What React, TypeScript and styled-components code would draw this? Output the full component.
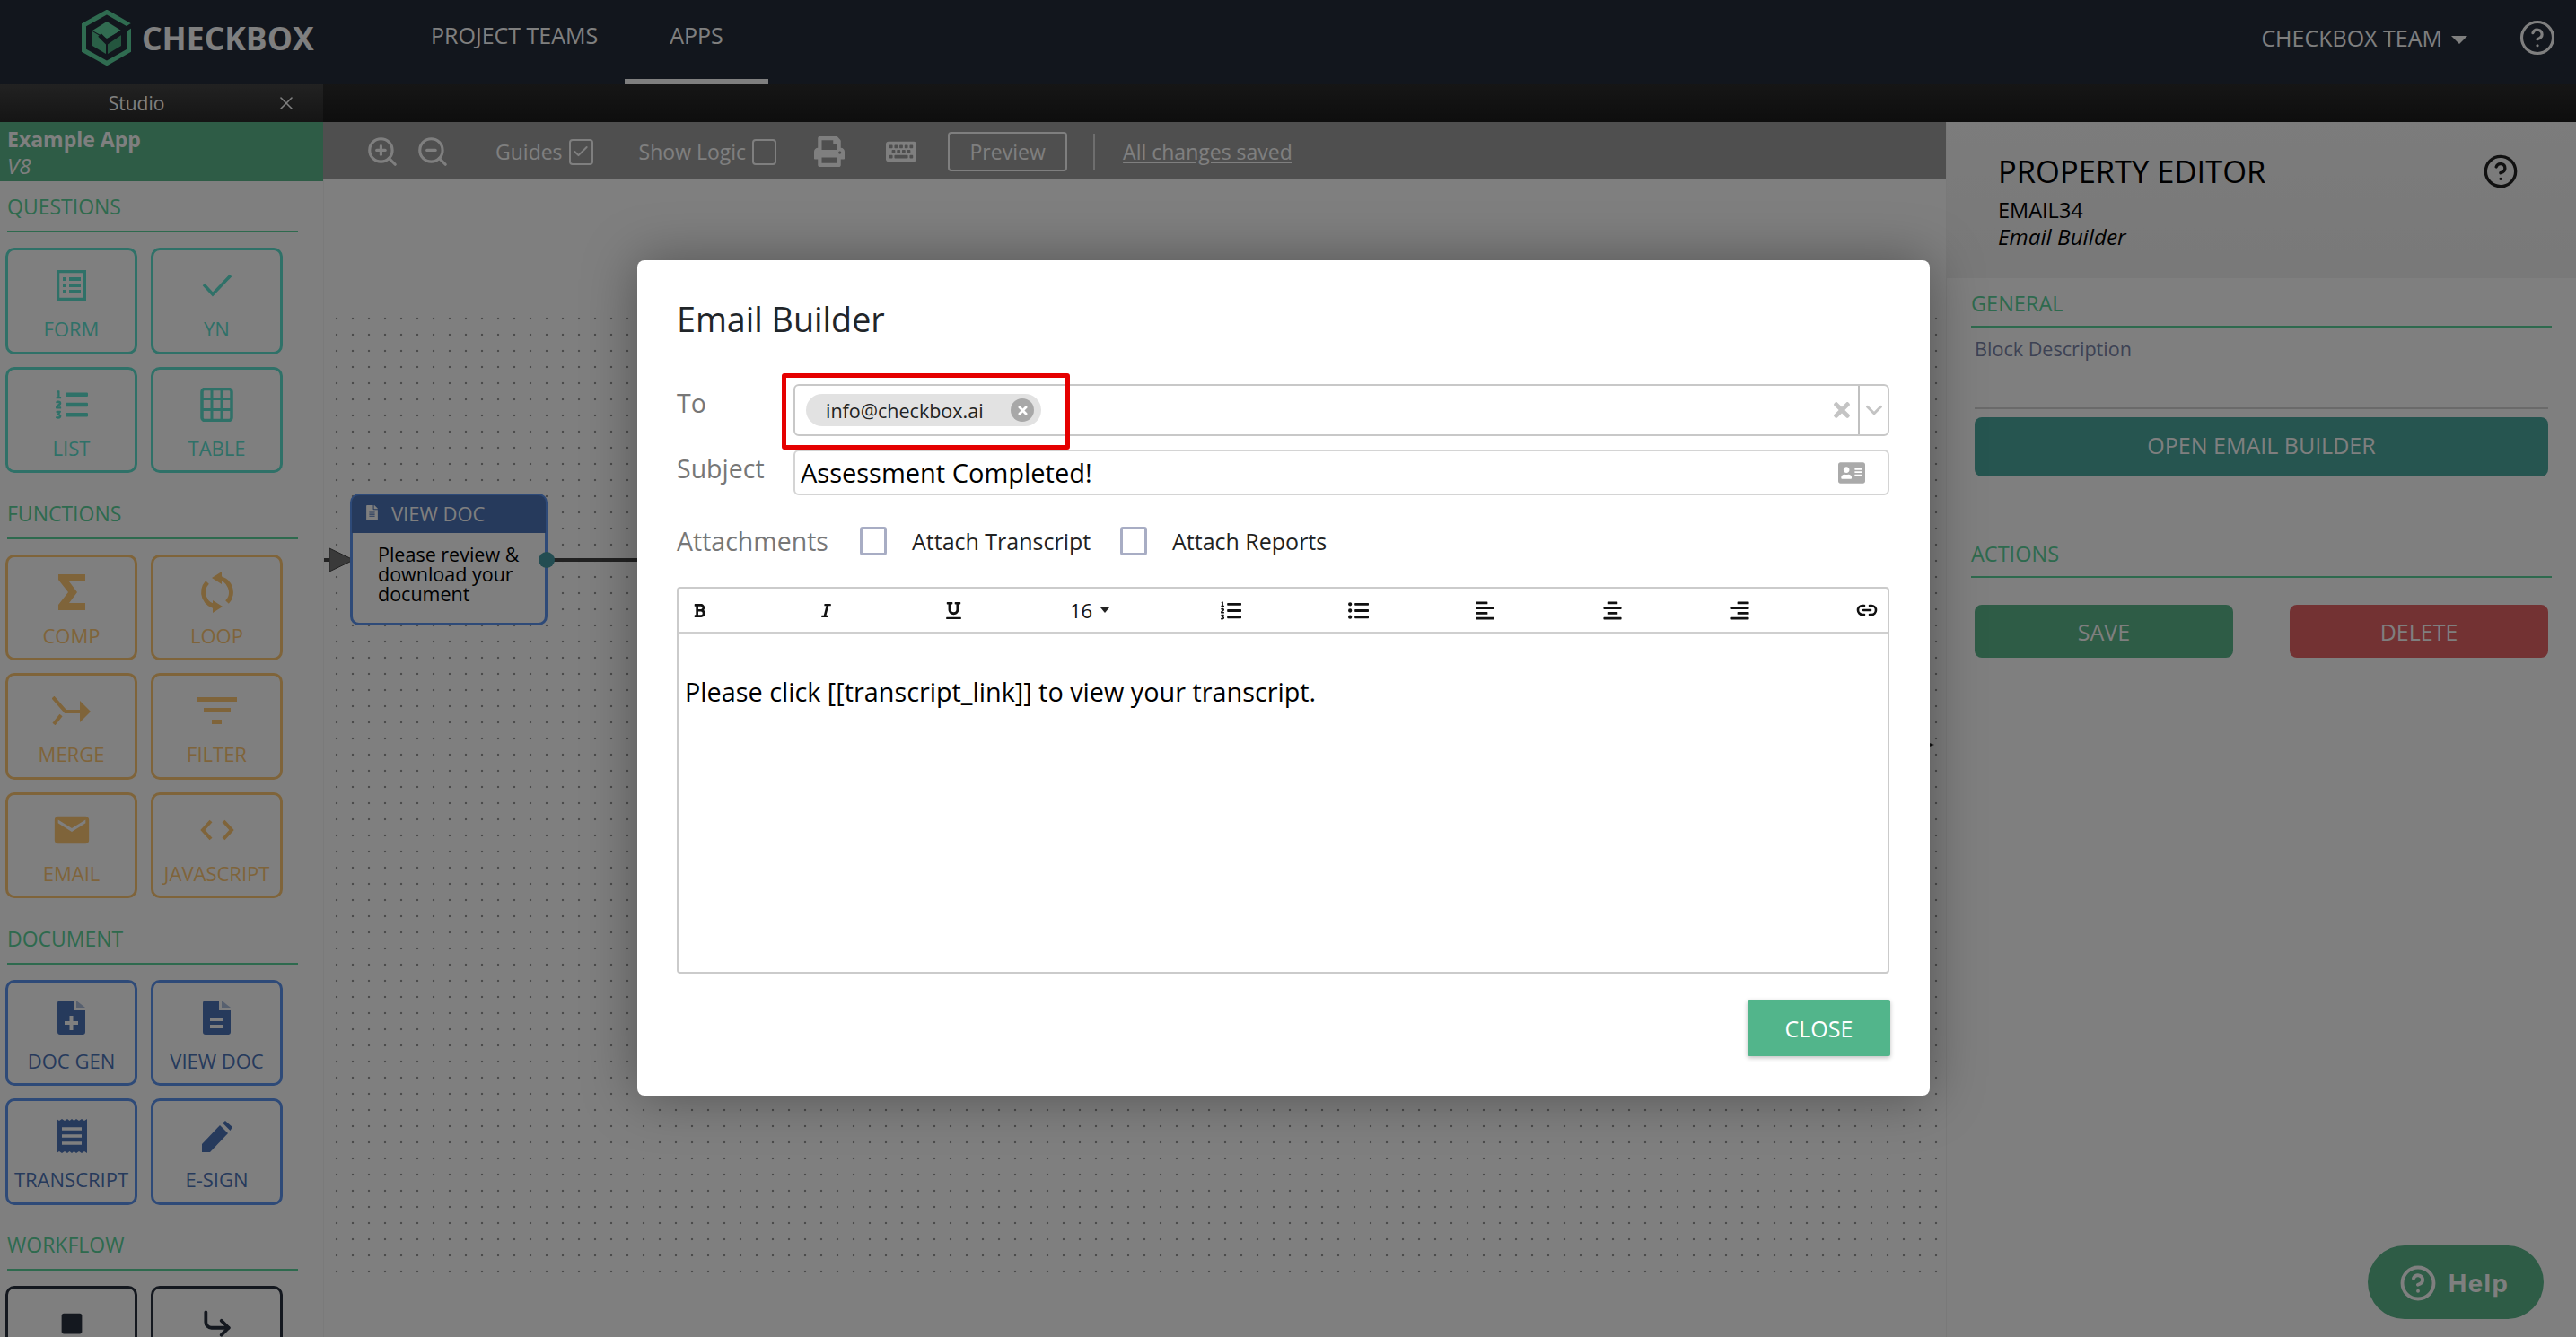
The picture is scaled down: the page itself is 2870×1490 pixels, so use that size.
import React from "react";
import styled, { createGlobalStyle } from "styled-components";
import {
  ChevronDown,
  Check,
  CircleHelp,
  CornerDownRight,
  Link2,
  X,
  ZoomIn,
  ZoomOut,
} from "lucide-react";
import {
  FaAddressCard,
  FaAlignCenter,
  FaAlignLeft,
  FaAlignRight,
  FaBold,
  FaFileAlt,
  FaItalic,
  FaKeyboard,
  FaListOl,
  FaListUl,
  FaPrint,
  FaSquare,
  FaTimes,
  FaUnderline,
} from "react-icons/fa";
import { MdEmail } from "react-icons/md";

type Tone = "teal" | "gold" | "blue" | "ink";

const toneColors: Record<Tone, { border: string; fg: string }> = {
  teal: { border: "#5ee2d0", fg: "#5ee2d0" },
  gold: { border: "#ffc874", fg: "#ffc874" },
  blue: { border: "#5c94f0", fg: "#4c74b8" },
  ink: { border: "#28303e", fg: "#28303e" },
};

const GlobalStyle = createGlobalStyle`
  html, body {
    margin: 0;
    height: 100%;
    overflow: hidden;
    background: #fff;
    font-family: "Open Sans", "Liberation Sans", sans-serif;
  }
  * { box-sizing: border-box; }
`;

const Page = styled.div`
  position: relative;
  width: 2870px;
  height: 1490px;
  overflow: hidden;
  display: flex;
  flex-direction: column;
`;

const TopNav = styled.header`
  height: 94px;
  flex-shrink: 0;
  display: flex;
  align-items: center;
  padding: 0 22px 0 91px;
  background: #242c3a;
  color: #fff;
`;

const Brand = styled.div`
  display: flex;
  align-items: center;
  gap: 10px;
  width: 389px;
  padding-bottom: 10px;
`;

const BrandName = styled.span`
  font-size: 35.5px;
  font-weight: 700;
  line-height: 44px;
  color: #fff;
`;

const NavLinks = styled.nav`
  display: flex;
  gap: 30px;
  height: 100%;
`;

const NavLink = styled.a<{ $active?: boolean }>`
  display: flex;
  align-items: center;
  height: 100%;
  padding: ${({ $active }) => ($active ? "0 50px" : "0")};
  padding-bottom: 10px;
  font-size: 25px;
  border-bottom: 6px solid ${({ $active }) => ($active ? "#fff" : "transparent")};
`;

const TeamMenu = styled.div`
  margin-left: auto;
  display: flex;
  align-items: center;
  padding-bottom: 10px;
  font-size: 25px;
`;

const Caret = styled.span`
  width: 0;
  height: 0;
  margin: 4px 57px 0 10px;
  border-left: 9px solid transparent;
  border-right: 9px solid transparent;
  border-top: 9px solid #fff;
`;

const Workspace = styled.div`
  flex: 1;
  min-height: 0;
  display: flex;
`;

const Sidebar = styled.aside`
  width: 360px;
  flex-shrink: 0;
  background: #fff;
  overflow: hidden;
`;

const StudioTab = styled.div`
  height: 42px;
  position: relative;
  display: flex;
  align-items: center;
  justify-content: center;
  padding-right: 56px;
  font-size: 21px;
  color: #fff;
  background: linear-gradient(180deg, #444 0%, #2a2a2a 100%);
`;

const StudioClose = styled(X)`
  position: absolute;
  right: 29px;
  top: 9px;
`;

const AppTitle = styled.div`
  height: 66px;
  padding: 3px 8px 0;
  background: #5cb88c;
  color: #fff;
`;

const AppName = styled.div`
  font-size: 23px;
  font-weight: 700;
  line-height: 32px;
`;

const AppVersion = styled.div`
  font-size: 24px;
  font-style: italic;
  line-height: 28px;
`;

const PaletteSection = styled.section`
  padding-top: 11px;
  & + & {
    padding-top: 27.5px;
  }
`;

const SectionHeading = styled.h3`
  margin: 0 28px 17px 8px;
  padding-bottom: 10px;
  font-size: 23px;
  font-weight: 400;
  line-height: 34px;
  color: #5cd49c;
  border-bottom: 2px solid #5cd49c;
`;

const BlockGrid = styled.div`
  display: grid;
  grid-template-columns: 147px 147px;
  grid-auto-rows: 118.5px;
  column-gap: 15px;
  row-gap: 14px;
  margin-left: 6px;
`;

const BlockButton = styled.div<{ $tone: Tone }>`
  display: flex;
  flex-direction: column;
  align-items: center;
  padding-top: 19px;
  border: 3.5px solid ${({ $tone }) => toneColors[$tone].border};
  border-radius: 10px;
  color: ${({ $tone }) => toneColors[$tone].fg};
`;

const BlockIcon = styled.div`
  height: 40px;
  display: flex;
  align-items: center;
  justify-content: center;
`;

const BlockLabel = styled.div`
  margin-top: 13px;
  font-size: 22px;
  line-height: 30px;
  white-space: nowrap;
`;

const MainColumn = styled.div`
  flex: 1;
  min-width: 0;
  display: flex;
  flex-direction: column;
`;

const DarkBand = styled.div`
  height: 42px;
  flex-shrink: 0;
  background: linear-gradient(180deg, #2c2c2c 0%, #1c1c1c 100%);
`;

const MainRow = styled.div`
  flex: 1;
  min-height: 0;
  display: flex;
`;

const CanvasColumn = styled.div`
  width: 1808px;
  flex-shrink: 0;
  display: flex;
  flex-direction: column;
`;

const ToolBar = styled.div`
  height: 64px;
  flex-shrink: 0;
  display: flex;
  align-items: center;
  padding: 2px 0 0 47px;
  background: #9e9e9e;
  color: #fff;
  font-size: 23px;
`;

const ToolSlot = styled.div<{ $gap: number }>`
  display: flex;
  align-items: center;
  gap: 7px;
  margin-left: ${({ $gap }) => $gap}px;
`;

const ToolCheck = styled.span`
  width: 27px;
  height: 29px;
  display: flex;
  align-items: center;
  justify-content: center;
  border: 2.5px solid #fff;
  border-radius: 4px;
`;

const PreviewButton = styled.div`
  width: 133px;
  height: 44px;
  display: flex;
  align-items: center;
  justify-content: center;
  border: 2.5px solid #fff;
  border-radius: 4px;
`;

const ToolDivider = styled.span`
  display: block;
  width: 2px;
  height: 40px;
  background: #ddd;
`;

const SavedLink = styled.a`
  text-decoration: underline;
`;

const Canvas = styled.div`
  position: relative;
  flex: 1;
  padding: 146px 0 0 5px;
  background: #fefefe;
  border-left: 1px solid #f4f4f4;
`;

const DotField = styled.div`
  height: 1080px;
  background-image: radial-gradient(circle, #999 1.2px, transparent 1.6px);
  background-size: 18px 18px;
`;

const FlowNode = styled.div`
  position: absolute;
  left: 29px;
  top: 350px;
  width: 220px;
  height: 147px;
  background: #fefefe;
  border: 3.5px solid #5c94f0;
  border-radius: 10px;
`;

const FlowNodeHead = styled.div`
  height: 42px;
  margin: -1px -1px 0;
  display: flex;
  align-items: center;
  gap: 13px;
  padding: 0 0 3px 14px;
  background: #4c74b8;
  border-radius: 8px 8px 0 0;
  color: #fff;
  font-size: 22px;
`;

const FlowNodeText = styled.div`
  padding: 13px 8px 0 28px;
  font-size: 21.5px;
  line-height: 22px;
  color: #000;
`;

const InArrow = styled.svg`
  position: absolute;
  left: 0;
  top: 410px;
`;

const OutArrow = styled.span`
  position: absolute;
  left: 1778px;
  top: 624px;
  width: 0;
  height: 0;
  border-top: 6px solid transparent;
  border-bottom: 6px solid transparent;
  border-left: 16px solid #222;
`;

const NodePort = styled.span`
  position: absolute;
  left: 239px;
  top: 415px;
  width: 18px;
  height: 18px;
  border-radius: 50%;
  background: #469aa4;
`;

const NodeWire = styled.span`
  position: absolute;
  left: 256px;
  top: 422px;
  width: 400px;
  height: 4px;
  background: #444;
`;

const PropertyPanel = styled.aside`
  flex: 1;
  display: flex;
  flex-direction: column;
  background: #fff;
  border-left: 1px solid #f2f2f2;
`;

const PanelHeader = styled.div`
  height: 174px;
  flex-shrink: 0;
  padding: 30px 64px 0 57px;
  background: linear-gradient(180deg, #f8f8f8 0%, #f2f2f2 100%);
  color: #111;
`;

const PanelTitleRow = styled.div`
  display: flex;
  align-items: center;
  justify-content: space-between;
  margin-bottom: 3px;
`;

const PanelTitle = styled.h2`
  margin: 0;
  font-size: 34.5px;
  font-weight: 400;
  line-height: 50px;
  color: #000;
`;

const PanelMeta = styled.div<{ $italic?: boolean }>`
  font-size: ${({ $italic }) => ($italic ? "24.3px" : "23.5px")};
  line-height: 30px;
  color: #000;
  font-style: ${({ $italic }) => ($italic ? "italic" : "normal")};
`;

const PanelBody = styled.div`
  padding: 13px 27px 0;
`;

const PanelHeading = styled.h3<{ $top?: number }>`
  margin: ${({ $top }) => $top ?? 0}px 0 0;
  padding-bottom: 10px;
  font-size: 23.5px;
  font-weight: 400;
  line-height: 30px;
  color: #5cd49c;
  border-bottom: 2px solid #5cd49c;
`;

const DescriptionField = styled.div`
  height: 91px;
  margin: 0 4px;
  padding-top: 9px;
  font-size: 21.6px;
  line-height: 30px;
  color: #7a84a8;
  border-bottom: 2px solid #d4d4d4;
`;

const PanelButton = styled.div<{ $bg: string; $h: number; $lift?: number }>`
  height: ${({ $h }) => $h}px;
  display: flex;
  align-items: center;
  justify-content: center;
  padding-bottom: ${({ $lift }) => $lift ?? 0}px;
  border-radius: 8px;
  background: ${({ $bg }) => $bg};
  color: #fff;
  font-size: 25px;
`;

const WideButtonSlot = styled.div`
  margin: 9px 4px 0;
`;

const ActionRow = styled.div`
  display: flex;
  justify-content: space-between;
  margin: 30px 4px 0;
  & > * {
    width: 288px;
  }
`;

const HelpPill = styled.div`
  position: absolute;
  right: 36px;
  bottom: 20px;
  width: 196px;
  height: 82px;
  display: flex;
  align-items: center;
  justify-content: center;
  gap: 13px;
  padding: 2px 4px 0 0;
  border-radius: 41px;
  background: #5cb88c;
  color: #fff;
  font-family: Inter, "Liberation Sans", sans-serif;
  font-size: 27.5px;
  font-weight: 700;
  letter-spacing: 1.5px;
`;

const Backdrop = styled.div`
  position: absolute;
  inset: 0;
  padding: 290px 0 0 710px;
  background: rgba(0, 0, 0, 0.5);
`;

const Modal = styled.div`
  width: 1440px;
  height: 931px;
  padding: 42px 45px 0 44px;
  display: flex;
  flex-direction: column;
  background: #fff;
  border-radius: 8px;
  box-shadow: 0 0 60px rgba(0, 0, 0, 0.35);
`;

const ModalTitle = styled.h1`
  margin: 0 0 48px;
  font-size: 37.7px;
  font-weight: 400;
  line-height: 48px;
  color: #212529;
`;

const FieldRow = styled.div<{ $h: number; $labelTop: number }>`
  display: grid;
  grid-template-columns: 130px 1fr;
  height: ${({ $h }) => $h}px;
  margin-bottom: 15px;
  & > label {
    padding-top: ${({ $labelTop }) => $labelTop}px;
  }
`;

const FieldLabel = styled.label`
  font-size: 28.5px;
  line-height: 40px;
  color: #777;
`;

const SelectBox = styled.div`
  position: relative;
  display: flex;
  align-items: center;
  padding-left: 12px;
  border: 2px solid #c8c8c8;
  border-radius: 6px;
`;

const Chip = styled.div`
  width: 262px;
  height: 36px;
  display: flex;
  align-items: center;
  justify-content: space-between;
  padding: 0 8px 0 22px;
  border-radius: 18px;
  background: #e2e2e2;
  font-size: 21.5px;
  color: #222;
`;

const ChipClose = styled.span`
  width: 26px;
  height: 26px;
  display: flex;
  align-items: center;
  justify-content: center;
  border-radius: 50%;
  background: #a8a8a8;
  color: #fff;
`;

const SelectClear = styled.span`
  margin-left: auto;
  margin-right: 5px;
  display: flex;
  color: #c4c4c4;
`;

const SelectToggle = styled.span`
  width: 33px;
  height: 100%;
  display: flex;
  align-items: center;
  justify-content: center;
  border-left: 2px solid #c0c0c0;
  color: #c4c4c4;
`;

const RedHighlight = styled.div`
  position: absolute;
  left: -15px;
  top: -14px;
  width: 321px;
  height: 85px;
  border: 5px solid #e50000;
  border-radius: 3px;
  pointer-events: none;
`;

const SubjectBox = styled.div`
  display: flex;
  align-items: center;
  justify-content: space-between;
  padding: 0 25px 0 6px;
  border: 2px solid #d4d4d4;
  border-radius: 6px;
  font-size: 29px;
  color: #000;
`;

const SubjectIcon = styled(FaAddressCard)`
  color: #aaa;
`;

const AttachRow = styled.div`
  height: 40px;
  margin-top: 16px;
  display: flex;
  align-items: center;
`;

const AttachHeading = styled.span`
  width: 204px;
  font-size: 28.5px;
  color: #777;
`;

const AttachBox = styled.span`
  width: 30px;
  height: 32px;
  margin-right: 28px;
  border: 3px solid #a8adc4;
  border-radius: 3px;
`;

const AttachText = styled.span<{ $w: number }>`
  width: ${({ $w }) => $w}px;
  font-size: 25px;
  color: #222;
`;

const Editor = styled.div`
  height: 431px;
  margin-top: 31px;
  border: 2px solid #cbcbcb;
  border-radius: 4px;
`;

const EditorToolbar = styled.div`
  height: 50px;
  display: flex;
  align-items: center;
  justify-content: space-between;
  padding: 0 11px;
  border-bottom: 2px solid #cfcfcf;
  color: #111;
`;

const EditorTool = styled.span<{ $w?: number }>`
  width: ${({ $w }) => $w ?? 24}px;
  display: flex;
  align-items: center;
  justify-content: ${({ $w }) => ($w ? "flex-start" : "center")};
  gap: 9px;
  font-size: 22px;
  white-space: nowrap;
`;

const SmallCaret = styled.span`
  width: 0;
  height: 0;
  border-left: 5px solid transparent;
  border-right: 5px solid transparent;
  border-top: 6px solid #222;
`;

const EditorContent = styled.div`
  padding: 45px 7px 0;
  font-size: 28.8px;
  line-height: 40px;
  color: #000;
`;

const ModalFooter = styled.div`
  display: flex;
  justify-content: flex-end;
  margin: 29px -1px 0 0;
`;

const CloseButton = styled.div`
  width: 159px;
  height: 63px;
  display: flex;
  align-items: center;
  justify-content: center;
  border-radius: 2px;
  background: #52b58b;
  color: #fff;
  font-size: 25px;
  box-shadow: 0 2px 5px rgba(0, 0, 0, 0.25);
`;

const CheckboxLogo = () => (
  <svg width="57" height="62" viewBox="0 0 57 62">
    <path d="M28 2.5 L52.5 16.7 V45.3 L28 59.5 L2.5 45.3 V16.7 Z" fill="none" stroke="#5ed6a0" strokeWidth="5" />
    <path d="M28 13 L44 23 L28 32 L12 23 Z" fill="#62d8a2" />
    <path d="M12 24 L27 33 V49 L12 40 Z" fill="#54c08e" />
    <path d="M29 33 L44 24 V40 L29 49 Z" fill="#48aa7c" />
    <path d="M20 28 L28 36 L56 17" fill="none" stroke="#242c3a" strokeWidth="5" />
  </svg>
);

const FormGlyph = () => (
  <svg width="33" height="34" viewBox="0 0 33 34" fill="currentColor">
    <rect x="1.5" y="1.5" width="30" height="31" fill="none" stroke="currentColor" strokeWidth="3.5" />
    <path d="M7 8 H11 V12 H7Z M7 15 H11 V19 H7Z M7 22 H11 V26 H7Z M14 8 H27 V12 H14Z M14 15 H27 V19 H14Z M14 22 H27 V26 H14Z" />
  </svg>
);

const YesGlyph = () => (
  <svg width="34" height="26" viewBox="0 0 34 26">
    <path d="M2 12 L12 23 L32 2" fill="none" stroke="currentColor" strokeWidth="3.5" />
  </svg>
);

const TableGlyph = () => (
  <svg width="37" height="38" viewBox="0 0 37 38">
    <rect x="2" y="1.5" width="33" height="35" rx="3" fill="none" stroke="currentColor" strokeWidth="3.5" />
    <path d="M13 2V36M24 2V36M3 12.5H35M3 24.5H35" stroke="currentColor" strokeWidth="3" />
  </svg>
);

const SigmaGlyph = () => (
  <svg width="30" height="40" viewBox="0 0 30 40">
    <path d="M0 0 H30 V8 H12 L21 20 L12 32 H30 V40 H0 V34 L11 20 L0 6 Z" fill="currentColor" />
  </svg>
);

const LoopGlyph = () => (
  <svg width="40" height="46" viewBox="0 0 40 46">
    <g>
      <path d="M20 7 A16 16 0 0 1 31 34" fill="none" stroke="currentColor" strokeWidth="5" />
      <path d="M25 0 V14 L14 7 Z" fill="currentColor" />
    </g>
    <g transform="rotate(180 20 23)">
      <path d="M20 7 A16 16 0 0 1 31 34" fill="none" stroke="currentColor" strokeWidth="5" />
      <path d="M25 0 V14 L14 7 Z" fill="currentColor" />
    </g>
  </svg>
);

const MergeGlyph = () => (
  <svg width="43" height="32" viewBox="0 0 43 32">
    <path d="M1 1 L15 17 H33" fill="none" stroke="currentColor" strokeWidth="4" />
    <path d="M31 5 L43 17 L31 29 Z" fill="currentColor" />
    <path d="M2 31 L10 21" fill="none" stroke="currentColor" strokeWidth="4" />
  </svg>
);

const FilterGlyph = () => (
  <svg width="45" height="30" viewBox="0 0 45 30" fill="currentColor">
    <rect x="0" y="0" width="45" height="5" />
    <rect x="8" y="12" width="30" height="5" />
    <rect x="17" y="25" width="11" height="5" />
  </svg>
);

const CodeGlyph = () => (
  <svg width="38" height="24" viewBox="0 0 38 24">
    <path d="M12 2 L3 12 L12 22M26 2 L35 12 L26 22" fill="none" stroke="currentColor" strokeWidth="4" />
  </svg>
);

const DocGlyph = ({ plus }: { plus?: boolean }) => (
  <svg width="31" height="38" viewBox="0 0 31 38">
    <path d="M3 0 H18 V11 H31 V35 a3 3 0 0 1 -3 3 H3 a3 3 0 0 1 -3 -3 V3 a3 3 0 0 1 3 -3 Z" fill="currentColor" />
    <path d="M21 0 L31 8 H21 Z" fill="currentColor" opacity="0.45" />
    {plus ? (
      <path d="M15.5 17 V33 M8 25 H23" stroke="#fff" strokeWidth="4" />
    ) : (
      <path d="M8 21 H23 M8 29 H23" stroke="#fff" strokeWidth="4" />
    )}
  </svg>
);

const ReceiptGlyph = () => (
  <svg width="34" height="38" viewBox="0 0 34 38">
    <path
      d="M0 0 l3 2 3-2 3 2 3-2 2.5 2 2.5-2 2.5 2 2.5-2 3 2 3-2 3 2 3-2 V38 l-3-2 -3 2 -3-2 -3 2 -2.5-2 -2.5 2 -2.5-2 -2.5 2 -3-2 -3 2 -3-2 -3 2 Z"
      fill="currentColor"
    />
    <path d="M6 11 H28 M6 19 H28 M6 27 H28" stroke="#fff" strokeWidth="3.5" />
  </svg>
);

const PencilGlyph = () => (
  <svg width="34" height="35" viewBox="0 0 34 35" fill="currentColor">
    <path d="M0 35 V26 L20 5 L29 14 L9 35 Z" />
    <path d="M23 2.5 L26 0 L34 7 L31.5 11 Z" />
  </svg>
);

type Block = { label?: string; icon: React.ReactNode };

const paletteSections: { title: string; tone: Tone; blocks: Block[] }[] = [
  {
    title: "QUESTIONS",
    tone: "teal",
    blocks: [
      { label: "FORM", icon: <FormGlyph /> },
      { label: "YN", icon: <YesGlyph /> },
      { label: "LIST", icon: <FaListOl size={36} /> },
      { label: "TABLE", icon: <TableGlyph /> },
    ],
  },
  {
    title: "FUNCTIONS",
    tone: "gold",
    blocks: [
      { label: "COMP", icon: <SigmaGlyph /> },
      { label: "LOOP", icon: <LoopGlyph /> },
      { label: "MERGE", icon: <MergeGlyph /> },
      { label: "FILTER", icon: <FilterGlyph /> },
      { label: "EMAIL", icon: <MdEmail size={46} /> },
      { label: "JAVASCRIPT", icon: <CodeGlyph /> },
    ],
  },
  {
    title: "DOCUMENT",
    tone: "blue",
    blocks: [
      { label: "DOC GEN", icon: <DocGlyph plus /> },
      { label: "VIEW DOC", icon: <DocGlyph /> },
      { label: "TRANSCRIPT", icon: <ReceiptGlyph /> },
      { label: "E-SIGN", icon: <PencilGlyph /> },
    ],
  },
  {
    title: "WORKFLOW",
    tone: "ink",
    blocks: [
      { icon: <FaSquare size={26} /> },
      { icon: <CornerDownRight size={38} strokeWidth={2.4} /> },
    ],
  },
];

const App = () => {
  return (
    <Page>
      <GlobalStyle />
      <TopNav>
        <Brand>
          <CheckboxLogo />
          <BrandName>CHECKBOX</BrandName>
        </Brand>
        <NavLinks>
          <NavLink>PROJECT TEAMS</NavLink>
          <NavLink $active>APPS</NavLink>
        </NavLinks>
        <TeamMenu>
          CHECKBOX TEAM
          <Caret />
          <CircleHelp size={42} strokeWidth={1.8} />
        </TeamMenu>
      </TopNav>

      <Workspace>
        <Sidebar>
          <StudioTab>
            Studio
            <StudioClose size={24} strokeWidth={1.6} />
          </StudioTab>
          <AppTitle>
            <AppName>Example App</AppName>
            <AppVersion>V8</AppVersion>
          </AppTitle>
          {paletteSections.map(({ title, tone, blocks }) => (
            <PaletteSection key={title}>
              <SectionHeading>{title}</SectionHeading>
              <BlockGrid>
                {blocks.map(({ label, icon }, i) => (
                  <BlockButton key={label ?? i} $tone={tone}>
                    <BlockIcon>{icon}</BlockIcon>
                    {label ? <BlockLabel>{label}</BlockLabel> : null}
                  </BlockButton>
                ))}
              </BlockGrid>
            </PaletteSection>
          ))}
        </Sidebar>

        <MainColumn>
          <DarkBand />
          <MainRow>
            <CanvasColumn>
              <ToolBar>
                <ToolSlot $gap={0}>
                  <ZoomIn size={38} strokeWidth={2} />
                </ToolSlot>
                <ToolSlot $gap={18}>
                  <ZoomOut size={38} strokeWidth={2} />
                </ToolSlot>
                <ToolSlot $gap={51}>
                  Guides
                  <ToolCheck>
                    <Check size={20} strokeWidth={2.4} />
                  </ToolCheck>
                </ToolSlot>
                <ToolSlot $gap={51}>
                  Show Logic
                  <ToolCheck />
                </ToolSlot>
                <ToolSlot $gap={42}>
                  <FaPrint size={34} />
                </ToolSlot>
                <ToolSlot $gap={46}>
                  <FaKeyboard size={34} />
                </ToolSlot>
                <ToolSlot $gap={35}>
                  <PreviewButton>Preview</PreviewButton>
                </ToolSlot>
                <ToolSlot $gap={29}>
                  <ToolDivider />
                </ToolSlot>
                <ToolSlot $gap={31}>
                  <SavedLink>All changes saved</SavedLink>
                </ToolSlot>
              </ToolBar>
              <Canvas>
                <DotField />
                <NodeWire />
                <OutArrow />
                <InArrow width="34" height="28" viewBox="0 0 34 28">
                  <path d="M0 12 H8 V16 H0 Z" fill="#444" />
                  <path d="M6 1 L33 14 L6 27 Z" fill="#747474" stroke="#444" strokeWidth="1" />
                </InArrow>
                <FlowNode>
                  <FlowNodeHead>
                    <FaFileAlt size={17} />
                    VIEW DOC
                  </FlowNodeHead>
                  <FlowNodeText>Please review &amp; download your document</FlowNodeText>
                </FlowNode>
                <NodePort />
              </Canvas>
            </CanvasColumn>

            <PropertyPanel>
              <PanelHeader>
                <PanelTitleRow>
                  <PanelTitle>PROPERTY EDITOR</PanelTitle>
                  <CircleHelp size={40} strokeWidth={2} color="#222" />
                </PanelTitleRow>
                <PanelMeta>EMAIL34</PanelMeta>
                <PanelMeta $italic>Email Builder</PanelMeta>
              </PanelHeader>
              <PanelBody>
                <PanelHeading>GENERAL</PanelHeading>
                <DescriptionField>Block Description</DescriptionField>
                <WideButtonSlot>
                  <PanelButton $bg="#4caaa0" $h={66} $lift={4}>
                    OPEN EMAIL BUILDER
                  </PanelButton>
                </WideButtonSlot>
                <PanelHeading $top={71}>ACTIONS</PanelHeading>
                <ActionRow>
                  <PanelButton $bg="#5cb88c" $h={59}>
                    SAVE
                  </PanelButton>
                  <PanelButton $bg="#e66466" $h={59}>
                    DELETE
                  </PanelButton>
                </ActionRow>
              </PanelBody>
            </PropertyPanel>
          </MainRow>
        </MainColumn>
      </Workspace>

      <HelpPill>
        <CircleHelp size={42} strokeWidth={2.2} />
        Help
      </HelpPill>

      <Backdrop>
        <Modal>
          <ModalTitle>Email Builder</ModalTitle>
          <FieldRow $h={58} $labelTop={1}>
            <FieldLabel>To</FieldLabel>
            <SelectBox>
              <Chip>
                info@checkbox.ai
                <ChipClose>
                  <FaTimes size={15} />
                </ChipClose>
              </Chip>
              <SelectClear>
                <FaTimes size={26} />
              </SelectClear>
              <SelectToggle>
                <ChevronDown size={30} strokeWidth={2.4} />
              </SelectToggle>
              <RedHighlight />
            </SelectBox>
          </FieldRow>
          <FieldRow $h={51} $labelTop={1}>
            <FieldLabel>Subject</FieldLabel>
            <SubjectBox>
              Assessment Completed!
              <SubjectIcon size={30} />
            </SubjectBox>
          </FieldRow>
          <AttachRow>
            <AttachHeading>Attachments</AttachHeading>
            <AttachBox />
            <AttachText $w={232}>Attach Transcript</AttachText>
            <AttachBox />
            <AttachText $w={180}>Attach Reports</AttachText>
          </AttachRow>
          <Editor>
            <EditorToolbar>
              <EditorTool>
                <FaBold size={17} />
              </EditorTool>
              <EditorTool>
                <FaItalic size={17} />
              </EditorTool>
              <EditorTool>
                <FaUnderline size={19} />
              </EditorTool>
              <EditorTool $w={50}>
                16
                <SmallCaret />
              </EditorTool>
              <EditorTool>
                <FaListOl size={23} />
              </EditorTool>
              <EditorTool>
                <FaListUl size={23} />
              </EditorTool>
              <EditorTool>
                <FaAlignLeft size={23} />
              </EditorTool>
              <EditorTool>
                <FaAlignCenter size={23} />
              </EditorTool>
              <EditorTool>
                <FaAlignRight size={23} />
              </EditorTool>
              <EditorTool>
                <Link2 size={26} strokeWidth={2.6} />
              </EditorTool>
            </EditorToolbar>
            <EditorContent>Please click [[transcript_link]] to view your transcript.</EditorContent>
          </Editor>
          <ModalFooter>
            <CloseButton>CLOSE</CloseButton>
          </ModalFooter>
        </Modal>
      </Backdrop>
    </Page>
  );
};

export default App;
